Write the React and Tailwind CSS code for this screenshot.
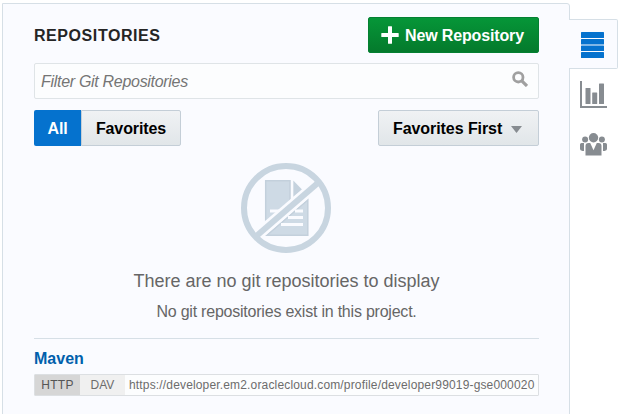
import React from "react";

function SearchIcon() {
  return (
    <svg width="16" height="16" viewBox="0 0 16 16" className="shrink-0" fill="none" stroke="#a0a0a0">
      <circle cx="6.3" cy="6.3" r="4.7" strokeWidth="2.8" />
      <path d="M9.8 9.8 L15 15" strokeWidth="3.2" />
    </svg>
  );
}

function PlusIcon() {
  return (
    <svg width="18" height="18" viewBox="0 0 18 18" className="shrink-0" fill="#fff">
      <path d="M7.5 0.3h3a.5.5 0 0 1 .5.5V7h6.2a.5.5 0 0 1 .5.5v3a.5.5 0 0 1-.5.5H11v6.200a.5.5 0 0 1-.5.5h-3a.5.5 0 0 1-.5-.5V11H.8a.5.5 0 0 1-.5-.5v-3A.5.5 0 0 1 .8 7H7V.8a.5.5 0 0 1 .5-.5z" />
    </svg>
  );
}

function EmptyIcon() {
  return (
    <svg width="90" height="90" viewBox="0 0 90 90" className="shrink-0">
      <path d="M24.700 17.700H49V38L24.700 58.500Z" fill="#cedae5" stroke="#c3d0dc" strokeWidth="1.500" />
      <path d="M52.300 17.500L61.500 27L52.300 34Z" fill="#c5d2de" />
      <path d="M29 48H38" stroke="#fafbff" strokeWidth="3" />
      <path d="M66.800 37V72.200H26Z" fill="#cedae5" stroke="#c3d0dc" strokeWidth="1.500" />
      <path d="M54 48H62M47 54.500H62M40 61.500H62" stroke="#fafbff" strokeWidth="3" />
      <path d="M15 73L78 19" stroke="#fafbff" strokeWidth="11" />
      <circle cx="45" cy="45" r="42" fill="none" stroke="#c8d5e0" strokeWidth="6" />
      <path d="M16 72.500L78 19" stroke="#c8d5e0" strokeWidth="6" />
    </svg>
  );
}

function StackIcon() {
  return (
    <svg width="23" height="26" viewBox="0 0 23 26" fill="#0572ce">
      <rect y="0" width="23" height="6" rx="0.500" />
      <rect y="7" width="23" height="5.500" rx="0.500" />
      <rect y="13.500" width="23" height="5.500" rx="0.500" />
      <rect y="20" width="23" height="6" rx="0.500" />
    </svg>
  );
}

function ChartIcon() {
  return (
    <svg width="27" height="27" viewBox="0 0 27 27" fill="#878c91">
      <path d="M0 0h2v25h25v2H0z" />
      <rect x="5.500" y="7" width="5" height="16" rx="0.500" />
      <rect x="12.200" y="11.500" width="5" height="11.500" rx="0.500" />
      <rect x="19" y="2.500" width="5" height="20.500" rx="0.500" />
    </svg>
  );
}

function TeamIcon() {
  return (
    <svg width="27" height="23" viewBox="0 0 27 23" fill="#878c91">
      <circle cx="13.500" cy="4.700" r="4.700" />
      <circle cx="5.100" cy="6.600" r="3" />
      <circle cx="21.900" cy="6.600" r="3" />
      <path d="M0 11.500Q0 10 1.500 10H4V18H2.500Q0 17.500 0 16zM27 11.500Q27 10 25.500 10H23V18H24.500Q27 17.500 27 16z" />
      <path d="M5.500 13Q5.500 10 8.500 10H10.200L13.500 17.300L16.800 10H18.500Q21.500 10 21.500 13V22.500H5.500z" />
    </svg>
  );
}

export default function App() {
  return (
    <div className="flex h-[414px] w-[632px] overflow-hidden bg-white pl-[2px] pt-[3px] font-['Liberation_Sans',Arial,sans-serif]">
      <main className="flex h-[420px] w-[568px] shrink-0 flex-col rounded-tr-[3px] border border-[#d6dfe6] bg-[#fafbff] pl-[31px] pr-[30px]">
        <header className="mt-[13px] flex h-9 items-center justify-between">
          <h1 className="pt-0.5 text-base font-bold tracking-[0.57px] text-[#252525]">REPOSITORIES</h1>
          <button className="flex h-9 w-[171px] items-center gap-[6px] whitespace-nowrap rounded-[2px] border border-[#048032] bg-gradient-to-b from-[#069638] to-[#047a2c] pl-3 text-base font-bold text-white">
            <PlusIcon />
            <span className="pt-0.5 tracking-[-0.14px]">New Repository</span>
          </button>
        </header>

        <div className="mt-[10px] flex h-9 shrink-0 items-center rounded-[2px] border border-[#dfe4e7] bg-[#fcfdfe] pl-[6px] pr-[10px]">
          <span className="grow pt-0.5 text-base italic tracking-[-0.3px] text-[#757575]">Filter Git Repositories</span>
          <div className="pb-[5px]"><SearchIcon /></div>
        </div>

        <div className="mt-[11px] flex h-9 shrink-0 justify-between text-base font-bold text-black">
          <div className="flex">
            <button className="w-[47px] rounded-l-[2px] bg-[#0572ce] pt-0.5 tracking-[-0.2px] text-white">All</button>
            <button className="w-[100px] rounded-r-[2px] border border-[#c4ced7] bg-gradient-to-b from-[#f0f2f4] to-[#e1e6e9] pt-0.5 tracking-[-0.1px]">Favorites</button>
          </div>
          <button className="flex w-[161px] items-center gap-[9px] whitespace-nowrap rounded-[2px] border border-[#c4ced7] bg-gradient-to-b from-[#f0f2f4] to-[#e1e6e9] pl-[14px]">
            <span className="pt-0.5 tracking-[-0.07px]">Favorites First</span>
            <svg width="11" height="7" viewBox="0 0 11 7" className="mt-0.5" fill="#878c91"><path d="M0 0h11L5.500 7z" /></svg>
          </button>
        </div>

        <section className="flex h-[193px] shrink-0 flex-col items-center whitespace-nowrap border-b border-[#d6dfe6] pt-[17px] text-[#666]">
          <div className="pr-px"><EmptyIcon /></div>
          <p className="mt-[16px] text-lg leading-6">There are no git repositories to display</p>
          <p className="mt-[7px] text-base leading-6 tracking-[-0.22px]">No git repositories exist in this project.</p>
        </section>

        <h2 className="mt-[8px] text-base font-bold leading-6 text-[#0060ac]">Maven</h2>
        <div className="mt-[3px] flex h-[22px] shrink-0 rounded-[1px] border border-[#dcdfe2] bg-[#fcfdfe] text-xs leading-5 text-[#6c6c6c]">
          <span className="w-[45px] bg-[#d6d6d6] text-center tracking-[0.3px] text-[#555]">HTTP</span>
          <span className="w-[45px] bg-[#f0f0f0] text-center">DAV</span>
          <span className="ml-1 whitespace-nowrap tracking-[0.16px]">https://developer.em2.oraclecloud.com/profile/developer99019-gse000020</span>
        </div>
      </main>

      <nav className="z-10 -ml-px mt-4 flex w-[49px] flex-col">
        <div className="flex h-[50px] items-center rounded-r-[2px] border border-l-0 border-[#d6dfe6] bg-[#fafbff] pl-3 pt-[2px]">
          <StackIcon />
        </div>
        <div className="mt-3 flex pl-[11px]"><ChartIcon /></div>
        <div className="mt-[25px] flex pl-[11px]"><TeamIcon /></div>
      </nav>
    </div>
  );
}
